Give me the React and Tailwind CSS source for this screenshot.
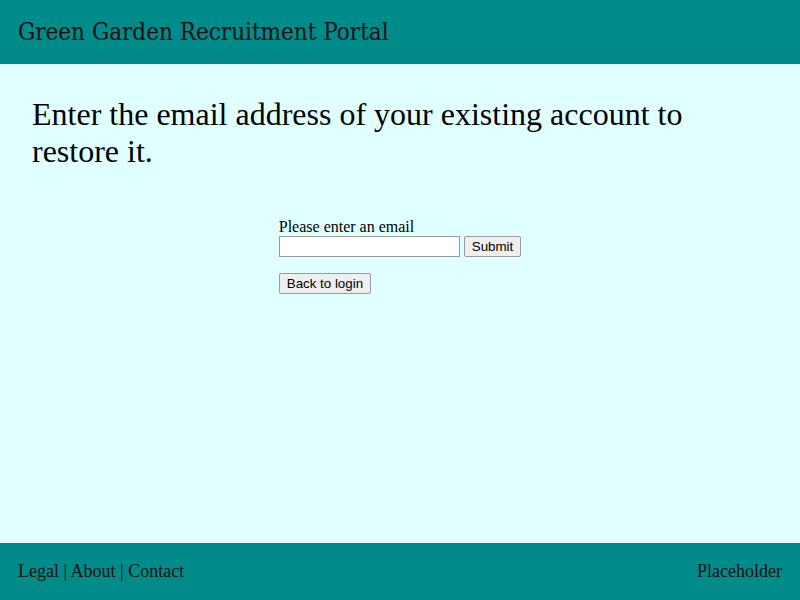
import React from 'react';

export default function App() {
    return (
        <div className="min-h-screen flex flex-col bg-[#e0ffff] text-black font-['Liberation_Serif',serif]">
            <header className="h-16 bg-[#008b8b] flex items-center px-[18px]">
                <h2 className="text-[24px] font-['DejaVu_Serif_Condensed','DejaVu_Serif',serif] font-stretch-condensed text-[#111]">Green Garden Recruitment Portal</h2>
            </header>

            <main className="flex-1 px-8 pt-[32px]">
                <h1 className="text-[32px] leading-[37px]">
                    Enter the email address of your existing account to restore it.
                </h1>

                <div className="flex justify-center mt-[48px]">
                    <form className="text-[16px]" onSubmit={(e) => e.preventDefault()}>
                        <label className="block leading-[18px]">Please enter an email</label>
                        <div className="flex items-center gap-1">
                            <input type="email" className="w-[181px] h-[21px] bg-white border border-[#999] px-1 text-[13px]" />
                            <button type="submit" className="h-[21px] px-[7px] bg-[#efefef] border border-[#9a9a9a] rounded-[2px] text-[13.33px] font-['Liberation_Sans',sans-serif]">Submit</button>
                        </div>
                        <button type="button" className="mt-4 h-[21px] px-[7px] bg-[#efefef] border border-[#9a9a9a] rounded-[2px] text-[13.33px] font-['Liberation_Sans',sans-serif]">Back to login</button>
                    </form>
                </div>
            </main>

            <footer className="h-[57px] bg-[#008b8b] flex items-center justify-between px-[18px] text-[18px] text-[#111]">
                <div>Legal | About | Contact</div>
                <div>Placeholder</div>
            </footer>
        </div>
    );
}
